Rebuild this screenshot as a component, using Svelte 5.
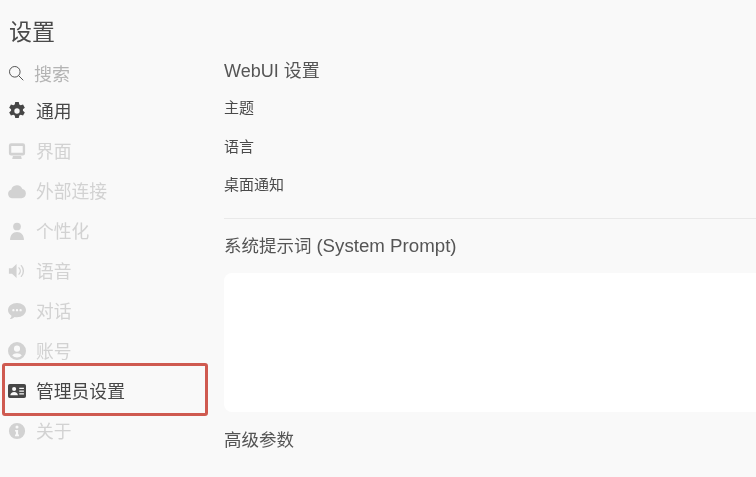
<script>
  const items = [
    { key: 'gear', label: '通用', on: true },
    { key: 'monitor', label: '界面' },
    { key: 'cloud', label: '外部连接' },
    { key: 'user', label: '个性化' },
    { key: 'sound', label: '语音' },
    { key: 'chat', label: '对话' },
    { key: 'account', label: '账号' },
    { key: 'card', label: '管理员设置', on: true, boxed: true },
    { key: 'info', label: '关于' }
  ];
</script>

<div class="page">
  <aside class="side">
    <h1>设置</h1>
    <div class="search">
      <svg viewBox="0 0 16 16" width="16" height="16" fill="none" stroke="currentColor" stroke-width="1">
        <circle cx="6.800" cy="6.800" r="5.300" />
        <path d="M10.800 10.800l4.200 4.200" stroke-linecap="round" />
      </svg>
      <span>搜索</span>
    </div>
    <nav>
      {#each items as it}
        <div class="item" class:on={it.on} class:boxed={it.boxed}>
          <svg viewBox="0 0 20 20" width="18" height="18" fill="currentColor">
            {#if it.key === 'gear'}
              <path transform="translate(10 10) scale(1.1) translate(-10 -10)" fill-rule="evenodd" d="M8.200 1h3.600l.5 2.500 1.400.8 2.400-.8 1.800 3.100-1.900 1.700v1.400l1.900 1.700-1.800 3.100-2.400-.8-1.400.8-.5 2.500H8.200l-.5-2.500-1.400-.8-2.400.8-1.800-3.100 1.900-1.700V8.300L2.100 6.600l1.800-3.100 2.400.8 1.400-.8zM10 7.300a2.700 2.700 0 1 0 0 5.400 2.700 2.700 0 0 0 0-5.400z" />
            {:else if it.key === 'monitor'}
              <path fill-rule="evenodd" d="M3.500 1.500h13A2.500 2.500 0 0 1 19 4v8.500a2.500 2.500 0 0 1-2.500 2.500h-13A2.500 2.500 0 0 1 1 12.500V4a2.500 2.500 0 0 1 2.500-2.500zm.1 3v7.500h12.800V4.500z" />
              <path d="M5.500 15.500h9l.8 3.300H4.700z" />
            {:else if it.key === 'cloud'}
              <path d="M4.800 18a4.800 4.800 0 0 1-1.200-9.400 6.500 6.500 0 0 1 12.400-.8A5.200 5.200 0 0 1 15 18z" />
            {:else if it.key === 'user'}
              <circle cx="10" cy="5" r="4.300" />
              <path d="M2.300 20c0-5.500 3-9 7.700-9s7.700 3.500 7.700 9z" />
            {:else if it.key === 'sound'}
              <path d="M1 7h3.500l5-4.800v15.600l-5-4.800H1z" />
              <path d="M12.200 6.500a5 5 0 0 1 0 7M14.800 4a9 9 0 0 1 0 12" fill="none" stroke="currentColor" stroke-width="1.500" stroke-linecap="round" />
            {:else if it.key === 'chat'}
              <path fill-rule="evenodd" d="M10 1c5.500 0 10 3.400 10 8s-4.500 8-10 8c-.9 0-1.800-.1-2.600-.3C6 18 4 19 2 19c1-1 1.700-2.400 1.900-3.700C1.500 13.900 0 11.600 0 9c0-4.600 4.500-8 10-8zM6 7.800a1.300 1.300 0 1 0 0 2.600 1.300 1.300 0 0 0 0-2.600zm4 0a1.300 1.300 0 1 0 0 2.600 1.300 1.300 0 0 0 0-2.600zm4 0a1.300 1.300 0 1 0 0 2.600 1.300 1.300 0 0 0 0-2.600z" />
            {:else if it.key === 'account'}
              <path fill-rule="evenodd" d="M10 0a10 10 0 1 1 0 20 10 10 0 0 1 0-20zm0 4a3.400 3.400 0 1 0 0 6.800A3.400 3.400 0 0 0 10 4zm0 8.500c-2.300 0-4.200.8-5.300 2.400A7.500 7.500 0 0 0 10 17.300a7.500 7.500 0 0 0 5.300-2.400c-1.100-1.600-3-2.400-5.300-2.400z" />
            {:else if it.key === 'card'}
              <path fill-rule="evenodd" d="M2 2.200h16a2 2 0 0 1 2 2v11.600a2 2 0 0 1-2 2H2a2 2 0 0 1-2-2V4.200a2 2 0 0 1 2-2zM6.800 5.500a2.300 2.300 0 1 0 0 4.600 2.300 2.300 0 0 0 0-4.600zM2.600 14.800h8.400c0-2.400-1.800-3.800-4.200-3.800s-4.200 1.400-4.200 3.800zM12.500 6.400v1.500h5.200V6.400zm0 3v1.500h5.200V9.400zm0 3v1.500h5.200v-1.500z" />
            {:else if it.key === 'info'}
              <path fill-rule="evenodd" d="M10 1a9 9 0 1 1 0 18 9 9 0 0 1 0-18zm0 2.800a1.700 1.700 0 1 0 0 3.400 1.700 1.700 0 0 0 0-3.400zM7.800 8.800v1.700h1V14h-1v1.700h4.400V14h-1V8.800z" />
            {/if}
          </svg>
          <span>{it.label}</span>
        </div>
      {/each}
    </nav>
  </aside>

  <main class="content">
    <h2 class="webui">WebUI 设置</h2>
    <div class="row r1">主题</div>
    <div class="row r2">语言</div>
    <div class="row r3">桌面通知</div>
    <hr />
    <h2 class="sys">系统提示词 <span class="latin">(System Prompt)</span></h2>
    <div class="area"></div>
    <h2 class="adv">高级参数</h2>
  </main>
</div>

<style>
  :global(body) {
    margin: 0;
    background: #f9f9f9;
    overflow: hidden;
  }
  .page {
    width: 756px;
    height: 477px;
    display: flex;
    overflow: hidden;
    background: #f9f9f9;
    font-family: "Liberation Sans", "Noto Sans CJK SC", sans-serif;
    color: #4a4a4a;
    filter: blur(0.35px);
  }
  .side {
    width: 224px;
    flex: none;
    padding: 17px 0 0 8px;
    box-sizing: border-box;
  }
  h1 {
    margin: 0;
    font-size: 23px;
    line-height: 30px;
    font-weight: 400;
    padding-left: 1px;
  }
  .search {
    display: flex;
    align-items: center;
    height: 24px;
    margin-top: 14px;
    gap: 10px;
    color: #555;
    font-size: 18px;
  }
  .search span {
    color: #b4b4b4;
  }
  nav {
    display: flex;
    flex-direction: column;
    margin-top: 6px;
  }
  .item {
    height: 40px;
    display: flex;
    align-items: center;
    gap: 10px;
    font-size: 17.800px;
    color: #d2d2d2;
    position: relative;
    flex: none;
  }
  .item svg {
    flex: none;
  }
  .item span {
    padding-bottom: 2px;
  }
  .item.on {
    color: #474747;
  }
  .item.boxed::after {
    content: "";
    position: absolute;
    left: -6px;
    top: -8px;
    width: 200px;
    height: 47px;
    border: 3px solid #cf5a50;
    border-radius: 3px;
  }
  .content {
    flex: 1;
    min-width: 0;
    padding-top: 60px;
  }
  h2 {
    margin: 0;
    font-weight: 400;
    font-size: 17.500px;
    line-height: 22px;
    color: #555;
  }
  .webui {
    font-size: 18px;
  }
  .latin {
    font-size: 18.700px;
  }
  .row {
    font-size: 15px;
    line-height: 20px;
    color: #4a4a4a;
  }
  .r1 { margin-top: 16px; }
  .r2 { margin-top: 19px; }
  .r3 { margin-top: 18px; }
  hr {
    margin: 23px 0 0;
    border: 0;
    border-top: 1px solid #e9e9e9;
  }
  .sys { margin-top: 16px; }
  .area {
    margin-top: 16px;
    height: 139px;
    background: #fff;
    border-radius: 8px 0 0 8px;
  }
  .adv { margin-top: 17px; }
</style>
